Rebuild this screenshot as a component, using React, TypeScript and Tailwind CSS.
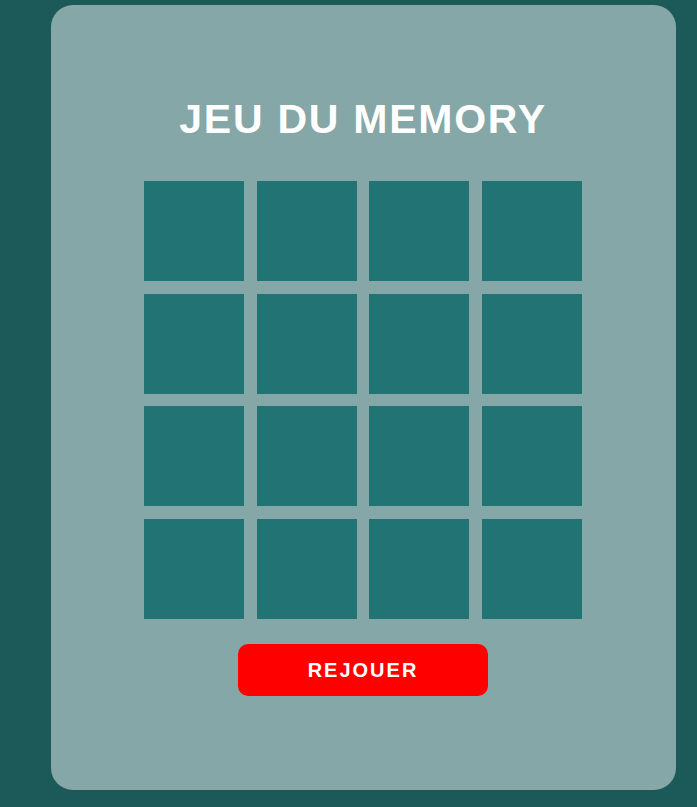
export default function App() {
  const tiles = Array.from({ length: 16 }, (_, i) => i);
  return (
    <div className="min-h-screen w-full bg-[#1b5a58] pt-[5px] pl-[51px]" style={{ fontFamily: '"Liberation Sans", Arial, sans-serif' }}>
      <div className="w-[625px] h-[785px] rounded-[22px] bg-[#85a7a7] flex flex-col items-center pt-[91px]">
        <h1 className="text-[41px] leading-[46px] font-bold text-white tracking-[1.75px] mr-[1px]">JEU DU MEMORY</h1>
        <div className="mt-[39px] grid grid-cols-[repeat(4,100px)] gap-x-[12.67px] gap-y-[12.67px] mr-[1px]">
          {tiles.map((t) => (
            <div key={t} className="w-[100px] h-[100px] bg-[#227373]" />
          ))}
        </div>
        <button className="mt-[25px] w-[250px] h-[52px] rounded-[10px] bg-[#ff0000] text-white font-bold text-[20px] tracking-[2px] mr-[1px]">
          REJOUER
        </button>
      </div>
    </div>
  );
}
